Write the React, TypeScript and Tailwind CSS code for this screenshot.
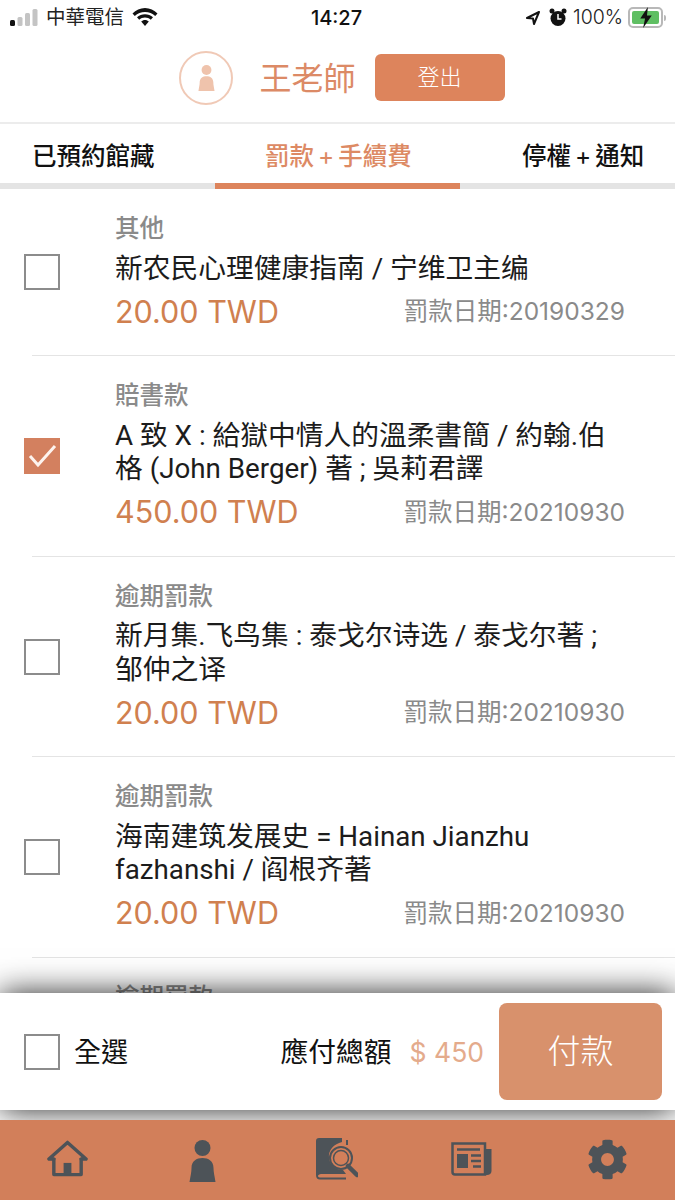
import { FaCog } from 'react-icons/fa';

const FONT = 'font-["Inter","Noto_Sans_CJK_TC",sans-serif]';

interface Fine {
  category: string;
  lines: string[];
  amount: string;
  date: string;
  checked?: boolean;
}

const fines: Fine[] = [
  { category: '其他', lines: ['新农民心理健康指南 / 宁维卫主编'], amount: '20.00 TWD', date: '20190329' },
  {
    category: '賠書款',
    lines: ['A 致 X : 給獄中情人的溫柔書簡 / 約翰.伯', '格 (John Berger) 著 ; 吳莉君譯'],
    amount: '450.00 TWD',
    date: '20210930',
    checked: true,
  },
  {
    category: '逾期罰款',
    lines: ['新月集.飞鸟集 : 泰戈尔诗选 / 泰戈尔著 ;', '邹仲之译'],
    amount: '20.00 TWD',
    date: '20210930',
  },
  {
    category: '逾期罰款',
    lines: ['海南建筑发展史 = Hainan Jianzhu', 'fazhanshi / 阎根齐著'],
    amount: '20.00 TWD',
    date: '20210930',
  },
  { category: '逾期罰款', lines: ['海南建筑发展史'], amount: '20.00 TWD', date: '20210930' },
];

const PersonIcon = ({ className }: { className: string }) => (
  <svg viewBox="0 0 26 42" className={className} fill="currentColor">
    <circle cx="13" cy="8" r="8" />
    <path d="M0 42 C1 36 2 32 2 28 C2 21 7 18 13 18 C19 18 24 21 24 28 C24 32 25 36 26 42 Z" />
  </svg>
);

const Checkbox = ({ checked }: { checked?: boolean }) =>
  checked ? (
    <div className="flex h-9 w-9 shrink-0 items-center justify-center bg-[#d3805f]">
      <svg viewBox="0 0 36 36" className="h-9 w-9" fill="none" stroke="#fdf3ee" strokeWidth="3">
        <path d="M6 18 L14 27 L31 8" />
      </svg>
    </div>
  ) : (
    <div className="h-9 w-9 shrink-0 border-2 border-[#8c8c8c] bg-white" />
  );

const FineRow = ({ fine }: { fine: Fine }) => (
  <div className="ml-8 flex items-center border-b border-[#e4e4e4] pt-6 pb-[21.500px]">
    <div className="-mt-[2px] -ml-2 w-[91px] shrink-0">
      <Checkbox checked={fine.checked} />
    </div>
    <div className="min-w-0 flex-1 pr-[50px]">
      <div className="text-[24.500px] leading-[30px] font-medium text-[#8a8a8a]">{fine.category}</div>
      <div className='mt-[8.500px] font-["Roboto","Noto_Sans_CJK_TC",sans-serif] text-[27.750px] leading-[33.500px] whitespace-nowrap text-[#1c1c1c]'>
        {fine.lines.map((line) => (
          <div key={line}>{line}</div>
        ))}
      </div>
      <div className="mt-[4.500px] flex items-center justify-between">
        <span className="text-[30.500px] leading-[44px] text-[#d0804f]">{fine.amount}</span>
        <span className="text-[24.500px] text-[#8a8a8a]">罰款日期:{fine.date}</span>
      </div>
    </div>
  </div>
);

const Plus = () => <span className="mx-[4px] font-normal">+</span>;

const navClass = 'flex items-center justify-center';

export default function App() {
  return (
    <div className={`flex h-[1200px] w-[675px] flex-col overflow-hidden bg-white ${FONT}`}>
      {/* status bar */}
      <div className="flex h-[35px] shrink-0 items-center pr-[9px] pl-2.5 text-[#222]">
        <div className="flex w-[289px] items-center">
          <svg width="28" height="18" viewBox="0 0 28 18" className="mr-2 shrink-0">
            <rect x="0" y="11" width="5" height="6" rx="1.5" fill="#111" />
            <rect x="7.500" y="8" width="5" height="9" rx="1.5" fill="#c4c4c4" />
            <rect x="15" y="4" width="5" height="13" rx="1.5" fill="#c4c4c4" />
            <rect x="22.500" y="0" width="5" height="17" rx="1.5" fill="#c4c4c4" />
          </svg>
          <span className="text-[19.500px] leading-none">中華電信</span>
          <svg width="26" height="19" viewBox="0 0 26 19" className="ml-2 shrink-0" fill="#111">
            <path d="M13 4 C17 4 20.500 5.500 23.200 8 L25.500 5.500 C22.200 2.200 17.800 0 13 0 C8.200 0 3.800 2.200 0.500 5.500 L2.800 8 C5.500 5.500 9 4 13 4 Z" />
            <path d="M13 9.500 C15.200 9.500 17.200 10.300 18.800 11.700 L21 9.300 C18.800 7.300 16 6.200 13 6.200 C10 6.200 7.200 7.300 5 9.300 L7.200 11.700 C8.800 10.300 10.800 9.500 13 9.500 Z" />
            <path d="M13 12 C11.500 12 10.200 12.600 9.200 13.500 L13 18 L16.800 13.500 C15.800 12.600 14.500 12 13 12 Z" />
          </svg>
        </div>
        <span className="w-[75px] text-center text-[20px] leading-none font-medium text-[#111]">14:27</span>
        <div className="flex flex-1 items-center justify-end">
          <svg width="16" height="16" viewBox="0 0 16 16" className="mr-2" fill="none" stroke="#111" strokeWidth="2">
            <path d="M14 2 L2 8 L8 8.500 L9 14 Z" strokeLinejoin="round" />
          </svg>
          <svg width="18" height="19" viewBox="0 0 18 19" className="mr-1.5" fill="#111">
            <circle cx="9" cy="10.500" r="7.500" />
            <circle cx="3" cy="3" r="2.500" />
            <circle cx="15" cy="3" r="2.500" />
            <path d="M9 6 V11 H12.500" fill="none" stroke="#fff" strokeWidth="1.500" />
          </svg>
          <span className="text-[19.500px] leading-none font-light text-[#222]">100%</span>
          <div className="ml-[5px] flex items-center">
            <div className="relative h-[21px] w-[35px] rounded-[5px] border-2 border-[#b8b8b8] p-[2px]">
              <div className="h-full w-full rounded-[2px] bg-[#5fbf63]" />
              <svg viewBox="0 0 14 22" className="absolute top-[-2px] left-[9px] h-[21px] w-[14px]" fill="#111">
                <path d="M9 0 L1 12 H6 L4 22 L13 9 H8 Z" />
              </svg>
            </div>
            <div className="ml-px h-[6px] w-[2px] rounded-r-sm bg-[#b8b8b8]" />
          </div>
        </div>
      </div>

      {/* user header */}
      <div className="flex h-[89px] shrink-0 items-center justify-center border-b-2 border-[#ececec] pb-[2px] pl-[9px]">
        <div className="flex h-[54px] w-[54px] items-center justify-center rounded-full border-2 border-[#f0c9b6]">
          <PersonIcon className="h-[26px] w-[17px] text-[#efc3ac]" />
        </div>
        <span className="ml-[26px] pt-0.5 text-[32px] leading-none text-[#dc8a66]">王老師</span>
        <button className="ml-[19px] flex h-[47px] w-[130px] items-center justify-center rounded-[6px] bg-[#dd845c] text-[22px] font-light text-white">
          登出
        </button>
      </div>

      {/* tabs */}
      <div className="flex h-[59px] shrink-0 items-center pt-1.5 text-[24.500px] leading-none font-medium text-[#111]">
        <span className="ml-8 w-[233px] whitespace-nowrap">已預約館藏</span>
        <span className="w-[257px] whitespace-nowrap text-[#dd8a64]">
          罰款<Plus />手續費
        </span>
        <span className="whitespace-nowrap">
          停權<Plus />通知
        </span>
      </div>
      <div className="h-[6px] shrink-0 bg-[#e4e4e4]">
        <div className="ml-[215px] h-full w-[245px] bg-[#dd845c]" />
      </div>

      {/* fine list */}
      <div className="min-h-0 flex-1 overflow-hidden">
        {fines.map((fine, i) => (
          <FineRow key={i} fine={fine} />
        ))}
      </div>

      {/* pay bar */}
      <div className="relative z-10 flex h-[117px] shrink-0 items-center bg-white pr-[13px] pl-6 shadow-[0_0_30px_rgba(0,0,0,0.85)]">
        <Checkbox />
        <span className="ml-3.5 pt-1 text-[27px] text-[#111]">全選</span>
        <span className="ml-auto pt-0.5 text-[27.750px] text-[#111]">應付總額</span>
        <span className="ml-[18px] pt-0.5 text-[26.500px] text-[#e4ab8c]">$ 450</span>
        <button className="ml-[15px] flex h-[97px] w-[163px] items-center justify-center rounded-[8px] bg-[#d8916c] text-[33px] font-light text-white">
          付款
        </button>
      </div>

      {/* bottom nav */}
      <div className="relative z-20 mt-[10px] grid h-[80px] shrink-0 grid-cols-5 items-center bg-[#d27f5a] pb-[2px] text-[#4d5358]">
        <div className={navClass}>
          <svg viewBox="0 0 42 38" className="h-[38px] w-[41px]" fill="none" stroke="currentColor" strokeWidth="3.500" strokeLinejoin="round">
            <path d="M2 19 L21 2 L40 19 L35 19 M2 19 L7 19" strokeLinecap="round" />
            <path d="M7 18 V35 H35 V18" />
            <rect x="17" y="23" width="8" height="12" fill="currentColor" stroke="none" />
          </svg>
        </div>
        <div className={navClass}>
          <PersonIcon className="mt-[3px] h-[42px] w-[27px]" />
        </div>
        <div className={navClass}>
          <svg viewBox="0 0 42 42" className="-ml-[2px] h-[42px] w-[42px]" fill="currentColor">
            <path d="M3 0 H26 V4 C18 6 12 12 13 20 C14 28 20 32 27 32 L30 36 H5 C3.500 36 2 37 2 38 C2 39 3.500 39.500 5 39.500 H30 V41.500 H4 C1.500 41.500 0 40 0 37 V3 C0 1 1 0 3 0 Z" />
            <circle cx="25" cy="20" r="11" fill="none" stroke="currentColor" strokeWidth="2" />
            <circle cx="25" cy="20" r="7.500" fill="none" stroke="currentColor" strokeWidth="1.500" />
            <path d="M32 28 L41 37" stroke="currentColor" strokeWidth="4.500" strokeLinecap="round" />
            <rect x="30" y="2" width="2" height="5" />
          </svg>
        </div>
        <div className={navClass}>
          <svg viewBox="0 0 42 34" className="-ml-[2px] h-[34px] w-[42px]" fill="none" stroke="currentColor">
            <path d="M1.500 1.500 H34 V32.500 H4 C2.500 32.500 1.500 31.500 1.500 30 Z" strokeWidth="2.500" />
            <path d="M34 7 H40.500 V29 C40.500 31.500 38.500 33 36 33 H33 Z" fill="currentColor" stroke="none" />
            <path d="M6 7.500 H29 " strokeWidth="2.500" />
            <rect x="6" y="12" width="11" height="14" fill="currentColor" stroke="none" />
            <path d="M20 13.500 H30 M20 19 H30 M22 24.500 H30" strokeWidth="2.500" />
          </svg>
        </div>
        <div className={navClass}>
          <FaCog className="h-[41px] w-[41px]" />
        </div>
      </div>
    </div>
  );
}
